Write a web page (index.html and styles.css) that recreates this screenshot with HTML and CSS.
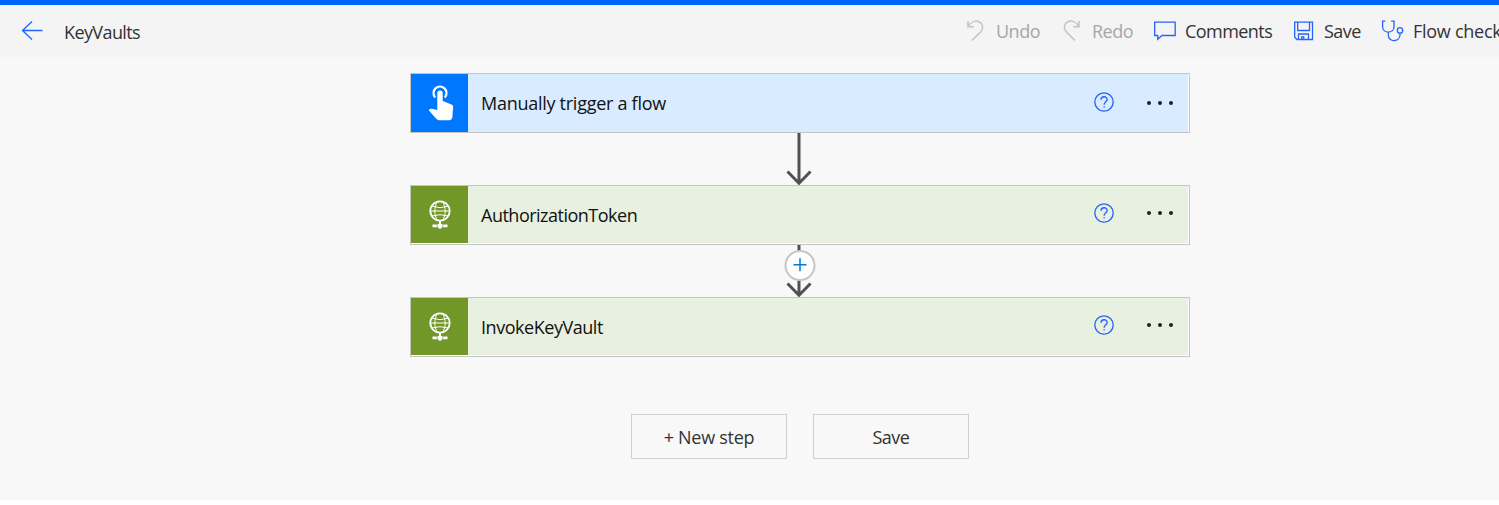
FILE: index.html
```html
<!DOCTYPE html>
<html lang="en">
<head>
<meta charset="utf-8">
<title>KeyVaults</title>
<link rel="stylesheet" href="styles.css">
</head>
<body>
<svg width="0" height="0" class="defs">
  <symbol id="help" viewBox="0 0 20 20"><circle cx="10" cy="10" r="9.2"/><path d="M7 7.800c0-4 6.200-4 6.200-.3 0 2.300-3.100 2.400-3.100 5.200M10.100 14.200v1.400"/></symbol>
  <symbol id="globe" viewBox="0 0 24 30"><g fill="none" stroke="#fff"><circle cx="12" cy="11" r="9.700" stroke-width="1.800"/><path stroke-width="1" d="M4 6.300q8 2.600 16 0M2 11h20M4 16q8-2.600 16 0M9.500 1.500c-3.600 6-3.600 13 0 19M14.500 1.500c3.600 6 3.600 13 0 19"/><path stroke-width="2" d="M12 21v4"/></g><path fill="#fff" d="M4.500 24.500h4.300v2.700H4.500zM9.500 24h5v3.800h-1.500v1h-2v-1H9.500zM15.200 24.500h4.300v2.700h-4.300z"/></symbol>
</svg>
<header class="topbar">
  <div class="heading">
    <svg class="back" width="22" height="20" viewBox="0 0 22 20"><path d="M21.500 9.500H1.500M11 .5 1.500 9.500 11 18.500"/></svg>
    <h1 class="title">KeyVaults</h1>
  </div>
  <nav class="tools">
    <div class="tool disabled"><svg width="22" height="24" viewBox="0 0 22 24"><path d="M2 2v5.800h5.800M2.300 7.500C5 2.500 9.500 1 13.500 3c3.600 2 4.200 6.500 1.300 9.700L6 21.500"/></svg><span class="t-undo">Undo</span></div>
    <div class="tool disabled"><svg width="22" height="24" viewBox="0 0 22 24"><path d="M17 2v5.800h-5.800M16.700 7.500C14 2.500 9.500 1 5.500 3 1.900 5 1.300 9.500 4.200 12.700L13 21.500"/></svg><span class="t-redo">Redo</span></div>
    <div class="tool"><svg width="24" height="24" viewBox="0 0 24 24"><path d="M1.700 3.200h20.500v13.300H9l-4.300 3.800v-3.800h-3z"/></svg><span class="t-comments">Comments</span></div>
    <div class="tool"><svg class="disk" width="24" height="24" viewBox="0 0 24 24"><path d="M1.700 3.200h17.800v17.300H4l-2.300-2.300zM4.700 3.500v8h11.800v-8M5.500 20.300v-5.300h10v5.300M8.700 20.300v-2.500h2v2.500"/></svg><span class="t-save">Save</span></div>
    <div class="tool"><svg width="24" height="24" viewBox="0 0 24 24"><path d="M4.300 2.200H1.600V8c0 6.800 11.400 6.800 11.400 0V2.200h-2.800M7.300 13.100V16c0 7.800 11.700 7.300 11.700-.2v-1.600"/><circle cx="19" cy="11.400" r="2.700"/></svg><span class="t-check">Flow check</span></div>
  </nav>
</header>
<main class="canvas">
  <section class="card trigger">
    <div class="badge"><svg width="26" height="36" viewBox="0 0 26 36"><path class="ring" d="M7.200 12.400a6.500 6.500 0 1 1 9.600 0"/><path class="hand" d="M9.300 8.300a2.700 2.700 0 0 1 5.400 0v7.800l8.800 3.300c1.300.5 1.800 1.300 1.700 2.500l-.9 10.700q-.4 2.600-2.800 2.600H11q-1.500 0-2.500-1.100L1.100 25.800c-.7-1.200.7-2.500 2.500-2.100l5.700 1.300z"/></svg></div>
    <div class="body"><span class="name t-manual">Manually trigger a flow</span><svg class="help"><use href="#help"/></svg><span class="more"><i></i><i></i><i></i></span></div>
  </section>
  <div class="connector"><svg width="30" height="52" viewBox="0 0 30 52"><path d="M14 0v50M2.500 38.500 14 50.200 25.500 38.500"/></svg></div>
  <section class="card http">
    <div class="badge"><svg width="24" height="30"><use href="#globe"/></svg></div>
    <div class="body"><span class="name t-auth">AuthorizationToken</span><svg class="help"><use href="#help"/></svg><span class="more"><i></i><i></i><i></i></span></div>
  </section>
  <div class="connector"><svg width="30" height="52" viewBox="0 0 30 52"><path d="M14 0v50M2.500 38.500 14 50.200 25.500 38.500"/></svg><svg class="insert" width="32" height="32" viewBox="0 0 32 32"><circle cx="16" cy="16.500" r="14.500"/><path d="M9.500 15.700h13M16 9.200v13"/></svg></div>
  <section class="card http">
    <div class="badge"><svg width="24" height="30"><use href="#globe"/></svg></div>
    <div class="body"><span class="name t-invoke">InvokeKeyVault</span><svg class="help"><use href="#help"/></svg><span class="more"><i></i><i></i><i></i></span></div>
  </section>
  <div class="actions">
    <button class="btn t-new">+ New step</button>
    <button class="btn t-save">Save</button>
  </div>
</main>
</body>
</html>
```

FILE: styles.css
```css
* { box-sizing: border-box; }
body {
  margin: 0;
  background: #fff;
  color: #333;
  font: 18px/24px "Open Sans", "Noto Sans", sans-serif;
  overflow: hidden;
}
svg { display: block; flex: none; }
.defs { position: absolute; }
.topbar {
  display: flex;
  justify-content: space-between;
  height: 57px;
  border-top: 5px solid #0064ff;
  background: #f4f4f4;
  white-space: nowrap;
}
.heading { display: flex; align-items: center; padding-left: 21px; gap: 21px; }
.back { fill: none; stroke: #1a66ff; stroke-width: 1.3; }
.title { margin: 1px 0 0; font-size: 18px; font-weight: 400; letter-spacing: -0.6px; }
.tools { display: grid; grid-template-columns: 96px 91px 140px 88px 118px; align-items: center; }
.tool { display: flex; align-items: center; gap: 8px; }
.tool svg { fill: none; stroke: #2563ff; stroke-width: 1.3; }
.tool .disk { margin-right: -1px; }
.disabled { color: #a6a6a6; }
.disabled svg { stroke: #c4c4c4; stroke-width: 1.6; }
.t-undo, .t-redo, .t-save { letter-spacing: -0.5px; }
.t-comments { letter-spacing: -0.55px; }
.t-check, .t-new, .t-manual { letter-spacing: -0.27px; }
.t-auth { letter-spacing: -0.5px; }
.t-invoke { letter-spacing: -0.46px; }
.canvas {
  display: flex;
  flex-direction: column;
  align-items: center;
  height: 443px;
  padding: 16px 0 0 101px;
  background: #f8f8f8;
}
.card {
  display: flex;
  width: 780px;
  height: 60px;
  padding: 0 1px 0 0;
  border: 1px solid #c5c4c3;
  background: #fff;
}
.http { padding-bottom: 1px; }
.badge { display: flex; width: 57px; align-items: center; justify-content: center; background: #0077ff; }
.trigger .badge { padding-left: 2px; }
.http .badge { background: #709727; }
.hand { fill: #fff; }
.ring { fill: none; stroke: #fff; stroke-width: 2.2; }
.body { display: flex; flex: 1; align-items: center; padding: 0 15px 0 13px; background: #d9ebff; color: #111; }
.http .body { background: #e8f0df; }
.name { flex: 1; }
.http .name { padding-top: 1px; }
.help { width: 20px; height: 20px; margin: -2px 33px 0 0; fill: none; stroke: #2563ff; stroke-width: 1.3; }
.http .help { margin-top: -3px; }
.more { display: flex; gap: 7px; margin-top: -1px; }
.http .more { margin-top: -3px; }
.more i { width: 4px; height: 4px; border-radius: 50%; background: #222; }
.connector { position: relative; height: 52px; width: 30px; }
.connector svg { fill: none; stroke: #505050; stroke-width: 3; }
.connector .insert { position: absolute; left: -1px; top: 4px; stroke-width: 1.5; }
.insert circle { fill: #fff; stroke: #c6c6c6; stroke-width: 2; }
.connector .insert path { stroke: #0078d4; }
.actions { display: flex; gap: 26px; margin-top: 57px; }
.btn {
  width: 156px;
  height: 45px;
  padding: 0;
  border: 1px solid #d0d0d0;
  background: #f8f8f8;
  color: #333;
  font: inherit;
}
```
